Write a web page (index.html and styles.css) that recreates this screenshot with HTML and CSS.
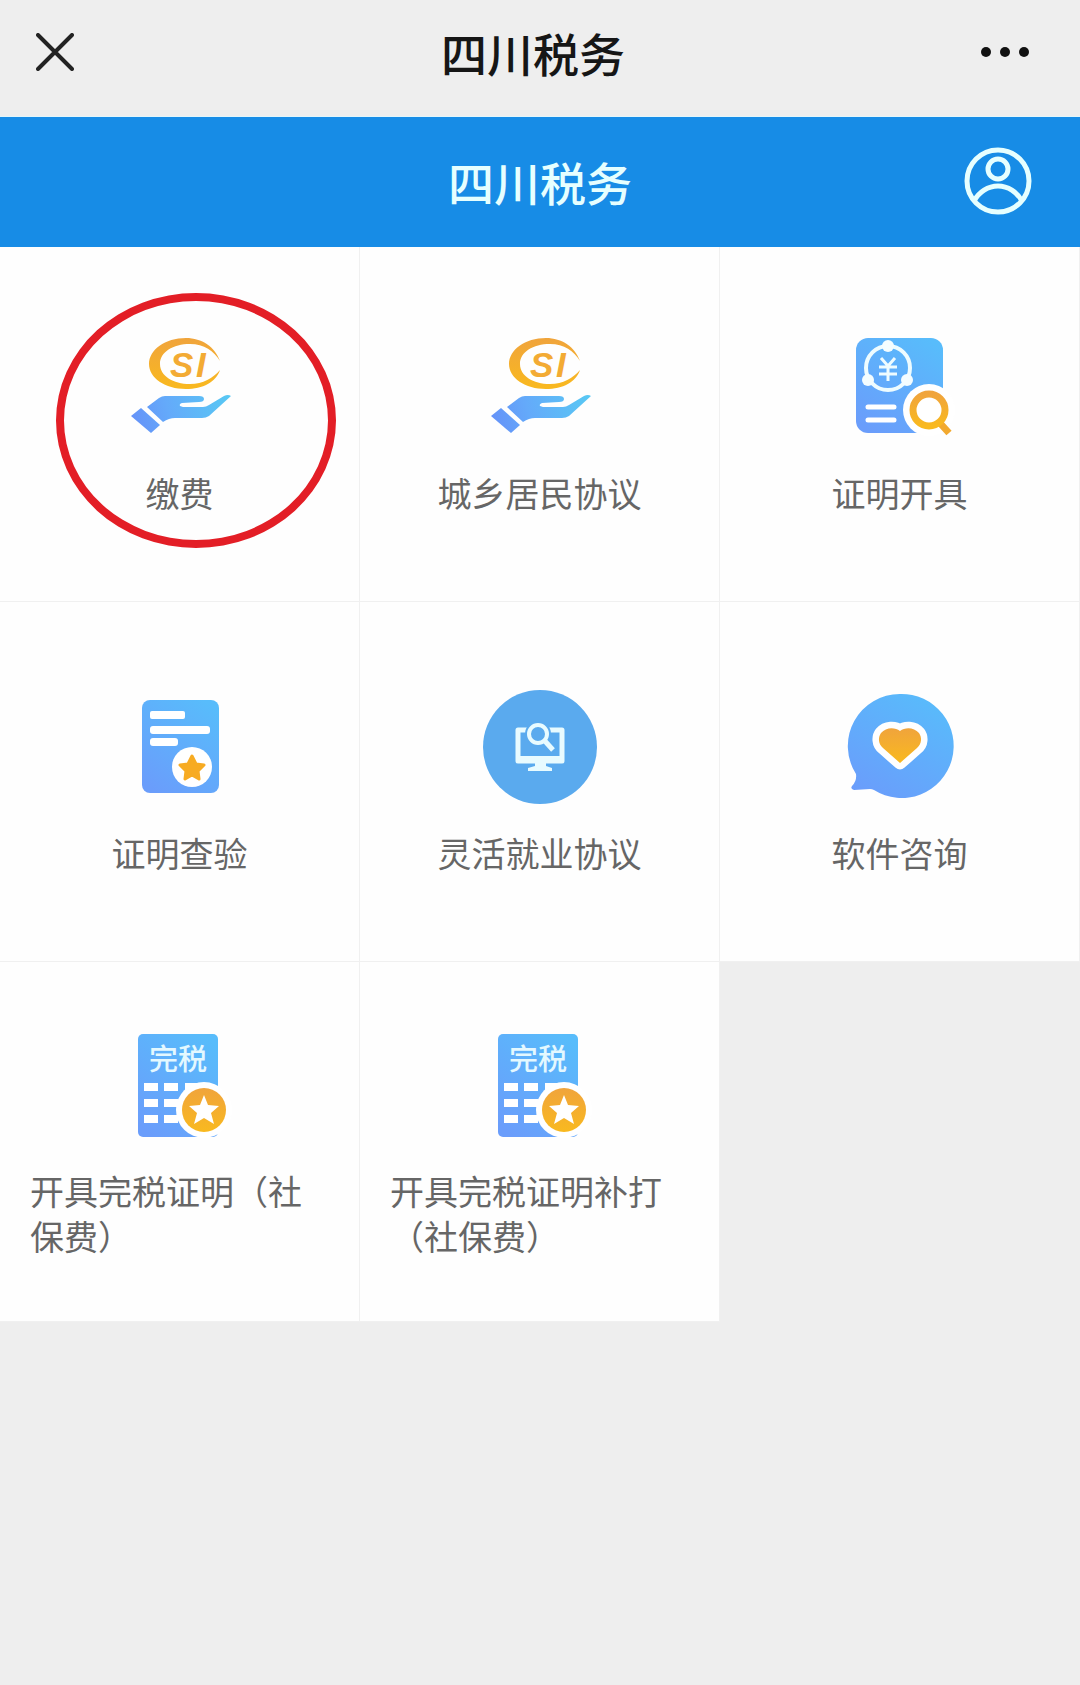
FILE: index.html
```html
<!DOCTYPE html>
<html lang="zh-CN">
<head>
    <meta charset="UTF-8">
    <meta name="viewport" content="width=device-width, initial-scale=1.0">
    <title>四川税务</title>
    <link rel="stylesheet" href="styles.css">
</head>
<body>

    <!-- Shared gradients and icons -->
    <svg class="defs" width="0" height="0" aria-hidden="true">
        <defs>
            <linearGradient id="blue" x1="0.8" y1="0" x2="0.2" y2="1">
                <stop offset="0" stop-color="#58bcfb"/>
                <stop offset="1" stop-color="#6a9dfb"/>
            </linearGradient>
            <linearGradient id="hand" gradientUnits="userSpaceOnUse" x1="8" y1="100" x2="107" y2="70">
                <stop offset="0" stop-color="#6590f8"/>
                <stop offset="0.4" stop-color="#64aafa"/>
                <stop offset="1" stop-color="#58c8f4"/>
            </linearGradient>
            <linearGradient id="gold" x1="0" y1="0" x2="0" y2="1">
                <stop offset="0" stop-color="#f0a43c"/>
                <stop offset="1" stop-color="#f9b91f"/>
            </linearGradient>
            <symbol id="icon-pay" viewBox="0 0 114 114">
                <path fill="url(#gold)" d="M97 31C92 17 79 8 63 8 42 8 26 20 26 34s16 25 37 25c17 0 30-7 34-19-7 8-17 14-30 14-17 0-30-8-30-20 0-12 13-20 30-20 14 0 24 7 30 17z"/>
                <text class="coin-text" x="47" y="47">S<tspan x="73">I</tspan></text>
                <path fill="url(#hand)" d="M8 86l10-8 19 17-9 8z"/>
                <path fill="url(#hand)" d="M24 77l12-9q3-2 6-2h34q5 0 5 3t-5 3l-17 1q-3 1-2 3l3 1h20q3 0 6-2l15-9q4-2 7 0L86 86q-3 2-7 2H52q-6 0-12 4z"/>
            </symbol>
            <symbol id="icon-receipt" viewBox="0 0 114 114">
                <rect x="15" y="6" width="80" height="103" rx="5" fill="url(#blue)"/>
                <text class="receipt-text" x="26" y="42">完税</text>
                <path fill="#fff" d="M21 55h14v8H21zM41 55h14v8H41zM62 55h14v8H62zM21 71h14v8H21zM41 71h14v8H41zM21 87h14v8H21zM41 87h14v8H41z"/>
                <circle cx="81" cy="82" r="28" fill="#fff"/>
                <circle cx="81" cy="82" r="22" fill="url(#gold)"/>
                <path fill="#fff" d="M81 67l4 10 11 1-8 7 3 11-10-6-10 6 3-11-8-7 11-1z"/>
            </symbol>
        </defs>
    </svg>

    <!-- Browser bar -->
    <header class="topbar">
        <button class="icon-button" aria-label="关闭">
            <svg width="38" height="38" viewBox="0 0 38 38" fill="none" stroke="#222" stroke-width="4" stroke-linecap="round">
                <path d="M2 2l34 34M36 2L2 36"/>
            </svg>
        </button>
        <h1 class="title">四川税务</h1>
        <button class="icon-button" aria-label="更多">
            <svg width="50" height="38" viewBox="0 0 50 38" fill="#111">
                <circle cx="6" cy="19" r="5"/>
                <circle cx="25" cy="19" r="5"/>
                <circle cx="44" cy="19" r="5"/>
            </svg>
        </button>
    </header>

    <!-- App header -->
    <div class="appbar">
        <h2 class="title">四川税务</h2>
        <button class="icon-button" aria-label="我的">
            <svg width="68" height="68" viewBox="0 0 68 68" fill="none" stroke="#e6ffff" stroke-width="5">
                <circle cx="34" cy="34" r="31"/>
                <circle cx="34" cy="22" r="10"/>
                <path d="M10 54c5-9 14-15 24-15s19 6 24 15"/>
            </svg>
        </button>
    </div>

    <main class="menu">
        <a class="cell" href="#pay">
            <svg class="icon"><use href="#icon-pay"/></svg>
            <span class="label">缴费</span>
            <span class="highlight"></span>
        </a>
        <a class="cell" href="#resident">
            <svg class="icon"><use href="#icon-pay"/></svg>
            <span class="label">城乡居民协议</span>
        </a>
        <a class="cell" href="#issue">
            <svg class="icon" viewBox="0 0 114 114">
                <rect x="13" y="8" width="87" height="95" rx="12" fill="url(#blue)"/>
                <circle cx="45" cy="38" r="22" fill="none" stroke="#eefcff" stroke-width="4"/>
                <g fill="#f4fdff">
                    <circle cx="45" cy="16" r="6"/>
                    <circle cx="25" cy="50" r="6"/>
                    <circle cx="64" cy="50" r="6"/>
                </g>
                <path d="M38 28l7 8 7-8M36 37h18M36 44h18M45 36v15" fill="none" stroke="#eefcff" stroke-width="3"/>
                <path d="M25 77h26M25 90h26" stroke="#fff" stroke-width="5" stroke-linecap="round"/>
                <circle cx="86" cy="80" r="26" fill="#fff"/>
                <path d="M96 92l10 11" stroke="#f2a92f" stroke-width="7"/>
                <circle cx="86" cy="80" r="16" fill="none" stroke="url(#gold)" stroke-width="7"/>
            </svg>
            <span class="label">证明开具</span>
        </a>
        <a class="cell" href="#verify">
            <svg class="icon" viewBox="0 0 114 114">
                <rect x="19" y="10" width="77" height="93" rx="8" fill="url(#blue)"/>
                <g fill="#fff">
                    <rect x="27" y="21" width="35" height="8" rx="2"/>
                    <rect x="27" y="36" width="60" height="8" rx="3"/>
                    <rect x="27" y="48" width="28" height="8" rx="3"/>
                    <circle cx="69" cy="77" r="20"/>
                </g>
                <path fill="#f7ab22" stroke="#f7ab22" stroke-width="3" stroke-linejoin="round" d="M69 66l4 8 8 1-6 6 1 8-7-4-7 4 1-8-6-6 8-1z"/>
            </svg>
            <span class="label">证明查验</span>
        </a>
        <a class="cell" href="#flexible">
            <svg class="icon" viewBox="0 0 114 114">
                <circle cx="57" cy="57" r="57" fill="#5aaaee"/>
                <path fill="none" stroke="#e8fbff" stroke-width="5" stroke-linejoin="round" d="M35 40h44v31H35z"/>
                <path fill="#e8fbff" d="M33 66h48v6H33zM52 72h11v4l6 2v3H45v-3l7-2z"/>
                <circle cx="55" cy="44" r="13" fill="#5aaaee"/>
                <circle cx="55" cy="44" r="9" fill="none" stroke="#e8fbff" stroke-width="4"/>
                <path d="M61 50l9 10" stroke="#e8fbff" stroke-width="5"/>
            </svg>
            <span class="label">灵活就业协议</span>
        </a>
        <a class="cell" href="#consult">
            <svg class="icon" viewBox="0 0 114 114">
                <path fill="url(#blue)" d="M57 4a52 52 0 1 1-26 96q-2-1-4-1l-16 1q-4-1-2-4 5-5 4-12A52 52 0 0 1 57 4z"/>
                <path fill="url(#gold)" stroke="#fff" stroke-width="13" stroke-linejoin="round" paint-order="stroke" d="M57 73L40 58c-5-4-5-11-2-15 5-6 14-6 19-2 5-4 14-4 19 2 3 4 3 11-2 15z"/>
            </svg>
            <span class="label">软件咨询</span>
        </a>
        <a class="cell" href="#tax-proof">
            <svg class="icon"><use href="#icon-receipt"/></svg>
            <span class="label">开具完税证明（社保费）</span>
        </a>
        <a class="cell" href="#tax-proof-reprint">
            <svg class="icon"><use href="#icon-receipt"/></svg>
            <span class="label">开具完税证明补打（社保费）</span>
        </a>
    </main>

</body>
</html>
```
FILE: styles.css
```css
* {
    box-sizing: border-box;
}
body {
    margin: 0;
    background-color: #eeeeee;
    font-family: "Noto Sans CJK SC", sans-serif;
}
.defs {
    position: absolute;
}
.title {
    grid-column: 2;
    margin: 0;
    font-size: 46px;
    line-height: 60px;
    font-weight: 500;
}
.icon-button {
    display: flex;
    padding: 0;
    border: none;
    background: none;
    cursor: pointer;
}
.icon-button:last-child {
    justify-self: end;
}
/* Bars */
.topbar,
.appbar {
    display: grid;
    grid-template-columns: 1fr auto 1fr;
    align-items: center;
}
.topbar {
    padding: 22px 50px 34px 36px;
    color: #161616;
    border-bottom: 1px solid #e2f6fb;
}
.appbar {
    position: relative;
    z-index: 1;
    padding: 30px 48px 32px;
    background-color: #178ce6;
    color: #e6ffff;
}
/* Menu grid, first row tucked under the app header */
.menu {
    display: grid;
    grid-template-columns: repeat(3, 1fr);
    margin-top: -5px;
}
.cell {
    position: relative;
    display: flex;
    flex-direction: column;
    align-items: center;
    justify-content: center;
    gap: 26px;
    aspect-ratio: 1;
    padding: 2px 30px 0;
    background-color: #fefefe;
    border-right: 1px solid #f0f0f0;
    border-bottom: 1px solid #f0f0f0;
    color: #666666;
    text-decoration: none;
}
.icon {
    width: 114px;
    height: 114px;
}
.label {
    font-size: 34px;
    line-height: 45px;
}
.coin-text {
    font: italic bold 35px "Liberation Sans", sans-serif;
    fill: #f3ab34;
}
.receipt-text {
    font-size: 29px;
    font-weight: 500;
    fill: #e4f8ff;
}
/* Red ring round the first entry */
.highlight {
    position: absolute;
    top: 51px;
    left: 56px;
    width: 280px;
    height: 255px;
    border: 8px solid #e31e26;
    border-radius: 50%;
}
```
